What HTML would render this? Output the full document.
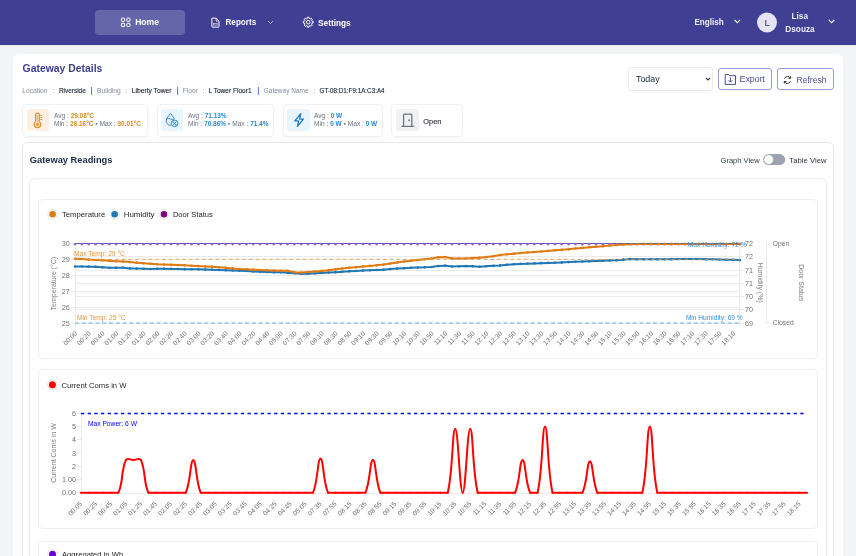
<!DOCTYPE html>
<html><head><meta charset="utf-8">
<style>
*{box-sizing:border-box;margin:0;padding:0}
html,body{width:856px;height:556px;overflow:hidden;background:#f3f4f6;font-family:"Liberation Sans", sans-serif;}
.a{position:absolute;white-space:nowrap;line-height:1}
#hdr{position:absolute;left:0;top:0;width:856px;height:45px;background:#3f3f94;}
.card{position:absolute;background:#fff;}
.bd{position:absolute;border:1px solid #e8eaee;}
svg text{font-family:"Liberation Sans", sans-serif;}
</style></head><body>
<div id="hdr"></div><div class="a" style="left:0;top:45px;width:856px;height:1px;background:#eaeaf3"></div>
<div class="a" style="left:95px;top:10px;width:90px;height:25px;border-radius:4px;background:rgba(255,255,255,0.2)"></div>
<svg class="a" style="left:0;top:0;will-change:transform" width="856" height="45">
  <g fill="none" stroke="#fff" stroke-width="1.1">
    <rect x="121.4" y="18.2" width="3.2" height="3.2" rx="0.6" stroke-width="1"/><rect x="126.8" y="18.2" width="3.2" height="3.2" rx="0.6" stroke-width="1"/>
    <rect x="121.4" y="23.4" width="3.2" height="3.2" rx="0.6" stroke-width="1"/><rect x="126.8" y="23.4" width="3.2" height="3.2" rx="0.6" stroke-width="1"/>
    <path d="M211.9,18.2 h4.3 l2.8,2.8 v5.6 q0,0.5 -0.5,0.5 h-6.1 q-0.5,0 -0.5,-0.5 z" stroke-width="1"/><path d="M216.2,18.2 v2.8 h2.8" stroke-width="0.8"/>
    <path d="M268,21 l2.5,2.5 l2.5,-2.5" stroke-width="0.8" stroke="#c8c8e8"/>
    <path d="M734.5,19.8 l2.8,2.8 l2.8,-2.8" stroke-width="1.1"/>
    <path d="M828.8,19.8 l2.8,2.8 l2.8,-2.8" stroke-width="1.1"/>
  </g>
  <rect x="213.6" y="23.3" width="3.6" height="1.8" fill="none" stroke="#fff" stroke-width="0.6" opacity="0.9"/>
  <g transform="translate(308.2,22.2)" fill="none" stroke="#fff" stroke-width="1">
    <circle r="1.8"/>
    <path d="M3.78,-0.94 L4.93,-0.82 L4.93,0.82 L3.78,0.94 L3.34,2.01 L4.07,2.91 L2.91,4.07 L2.01,3.34 L0.94,3.78 L0.82,4.93 L-0.82,4.93 L-0.94,3.78 L-2.01,3.34 L-2.91,4.07 L-4.07,2.91 L-3.34,2.01 L-3.78,0.94 L-4.93,0.82 L-4.93,-0.82 L-3.78,-0.94 L-3.34,-2.01 L-4.07,-2.91 L-2.91,-4.07 L-2.01,-3.34 L-0.94,-3.78 L-0.82,-4.93 L0.82,-4.93 L0.94,-3.78 L2.01,-3.34 L2.91,-4.07 L4.07,-2.91 L3.34,-2.01 Z" stroke-linejoin="round"/>
  </g>
  <circle cx="767" cy="22.5" r="10" fill="#e4e4f4"/>
  <text x="767.2" y="25.9" font-size="8.6" font-weight="700" fill="#5f5f7a" text-anchor="middle">L</text>
  <g font-weight="700" fill="#fff">
    <text x="135.2" y="25.4" font-size="8.55">Home</text>
    <text x="225.5" y="25.4" font-size="8.15">Reports</text>
    <text x="318" y="25.5" font-size="8.3">Settings</text>
    <text x="694.4" y="25" font-size="8.15" fill="#ececf8">English</text>
    <text x="799.8" y="18.5" font-size="8.2" text-anchor="middle" fill="#ececf8">Lisa</text>
    <text x="800" y="31.9" font-size="8.27" text-anchor="middle" fill="#ececf8">Dsouza</text>
  </g>
</svg>
<div class="card" style="left:13px;top:54px;width:829.5px;height:520px;border-radius:6px"></div>
<div class="bd" style="left:22px;top:142px;width:812px;height:430px;border-radius:6px;border-color:#e6e8ec"></div>
<div class="bd" style="left:29px;top:178px;width:797.8px;height:400px;border-radius:6px;border-color:#eceef1"></div>
<div class="bd" style="left:38px;top:199px;width:779.8px;height:159.5px;border-radius:5px;border-color:#eceef1"></div>
<div class="bd" style="left:38px;top:369px;width:779.8px;height:159.5px;border-radius:5px;border-color:#eceef1"></div>
<div class="bd" style="left:38px;top:540.5px;width:779.8px;height:100px;border-radius:5px;border-color:#eceef1"></div>
<!-- metric cards -->
<div class="bd" style="left:22px;top:104px;width:125.5px;height:32.5px;border-radius:4px;border-color:#eef0f3;box-shadow:0 1px 2px rgba(0,0,0,0.04)"></div>
<div class="bd" style="left:156.5px;top:104px;width:117.5px;height:32.5px;border-radius:4px;border-color:#eef0f3;box-shadow:0 1px 2px rgba(0,0,0,0.04)"></div>
<div class="bd" style="left:282.5px;top:104px;width:100.5px;height:32.5px;border-radius:4px;border-color:#eef0f3;box-shadow:0 1px 2px rgba(0,0,0,0.04)"></div>
<div class="bd" style="left:391px;top:104px;width:72px;height:32.5px;border-radius:4px;border-color:#eef0f3;box-shadow:0 1px 2px rgba(0,0,0,0.04)"></div>
<div class="a" style="left:27px;top:109px;width:22px;height:22px;border-radius:3px;background:#fdf0e2"></div>
<div class="a" style="left:161px;top:109px;width:22px;height:22px;border-radius:3px;background:#e9f4fd"></div>
<div class="a" style="left:287px;top:109px;width:22.5px;height:22px;border-radius:3px;background:#e9f4fd"></div>
<div class="a" style="left:396px;top:109px;width:22.5px;height:22px;border-radius:3px;background:#f1f1f3"></div>
<!-- select & buttons -->
<div class="bd" style="left:628px;top:67px;width:85px;height:24px;border-radius:3px;border-color:#e8eaed"></div>
<div class="bd" style="left:717.5px;top:68px;width:54.5px;height:22px;border-radius:3px;border-color:#9a9ad2"></div>
<div class="bd" style="left:777px;top:68px;width:57px;height:22px;border-radius:3px;border-color:#9a9ad2"></div>
<svg class="a" style="left:0;top:0;will-change:transform" width="856" height="556">
  <text x="22.6" y="71.6" font-size="10.4" font-weight="700" fill="#3d3d90">Gateway Details</text>
  <g font-size="6.7">
    <text x="22.2" y="93" fill="#868d99">Location</text><text x="52.3" y="93" fill="#868d99">:</text>
    <text x="58.9" y="93" fill="#1f2937" font-size="6.45" stroke="#1f2937" stroke-width="0.14">Riverside</text>
    <text x="97" y="93" fill="#868d99">Building</text><text x="125.3" y="93" fill="#868d99">:</text>
    <text x="131.8" y="93" fill="#1f2937" stroke="#1f2937" stroke-width="0.14">Liberty Tower</text>
    <text x="182.7" y="93" fill="#868d99">Floor</text><text x="202.6" y="93" fill="#868d99">:</text>
    <text x="208.6" y="93" fill="#1f2937" font-size="6.56" stroke="#1f2937" stroke-width="0.14">L Tower Floor1</text>
    <text x="263.7" y="93" fill="#868d99" font-size="6.53">Gateway Name</text><text x="313.3" y="93" fill="#868d99">:</text>
    <text x="319.5" y="93" fill="#1f2937" font-size="6.3" stroke="#1f2937" stroke-width="0.14">GT-08:D1:F9:1A:C3:A4</text>
  </g>
  <g stroke="#5050a8" stroke-width="0.85"><line x1="91.6" y1="87" x2="91.6" y2="95"/><line x1="177.6" y1="87" x2="177.6" y2="95"/><line x1="258.3" y1="87" x2="258.3" y2="95"/></g>
  <!-- metric texts -->
  <g font-size="6.6" fill="#6b7280">
    <text x="53.9" y="117.9">Avg : <tspan fill="#d8891c" font-weight="700" font-size="6.45">29.08°C</tspan></text>
    <text x="53.9" y="126.3">Min : <tspan fill="#d8891c" font-weight="700" font-size="6.45">28.16°C</tspan> <tspan font-size="4.2" dy="-1.7">●</tspan><tspan dy="1.7"> Max : </tspan><tspan fill="#d8891c" font-weight="700" font-size="6.45">30.01°C</tspan></text>
    <text x="188" y="117.9">Avg : <tspan fill="#2688d0" font-weight="700" font-size="6.45">71.13%</tspan></text>
    <text x="188" y="126.3">Min : <tspan fill="#2688d0" font-weight="700" font-size="6.45">70.86%</tspan> <tspan font-size="4.2" dy="-1.7">●</tspan><tspan dy="1.7"> Max : </tspan><tspan fill="#2688d0" font-weight="700" font-size="6.45">71.4%</tspan></text>
    <text x="314" y="117.9">Avg : <tspan fill="#2688d0" font-weight="700" font-size="6.45">0 W</tspan></text>
    <text x="314" y="126.3">Min : <tspan fill="#2688d0" font-weight="700" font-size="6.45">0 W</tspan> <tspan font-size="4.2" dy="-1.7">●</tspan><tspan dy="1.7"> Max : </tspan><tspan fill="#2688d0" font-weight="700" font-size="6.45">0 W</tspan></text>
  </g>
  <text x="423.3" y="123.8" font-size="7.4" fill="#1f2937" stroke="#1f2937" stroke-width="0.12">Open</text>
  <!-- icons -->
  <g fill="none" stroke="#e0912f" stroke-width="1.25">
    <path d="M35.7,121.6 V114.9 a1.8,1.8 0 0 1 3.6,0 V121.6 a3.3,3.3 0 1 1 -3.6,0 z"/>
    <path d="M40.5,115.5 h1.8 M40.5,117.5 h1.8 M40.5,119.5 h1.8" stroke-width="1"/>
  </g>
  <circle cx="37.5" cy="124.4" r="1.9" fill="#e9a55a"/>
  <rect x="37" y="115" width="1" height="7" fill="#eeb678"/>
  <g fill="none" stroke="#2a86cc" stroke-width="0.95">
    <path d="M170.5,113.2 L166.6,118.8 a4.6,4.6 0 0 0 4.2,6.6 M170.5,113.2 L174.4,118.8"/>
    <path d="M166.4,119 q2,-0.9 4,0 t4,0"/>
    <circle cx="174.6" cy="123.4" r="3.3"/><path d="M172.7,125.3 L176.5,121.5"/>
    <circle cx="173.5" cy="122.2" r="0.5"/><circle cx="175.7" cy="124.6" r="0.5"/>
  </g>
  <path d="M300.8,113.6 L294.8,120.9 H298.6 L297.4,126.4 L303.4,119.1 H299.6 Z" fill="none" stroke="#1f7bc2" stroke-width="1.3" stroke-linejoin="round"/>
  <g fill="none" stroke="#6b7280" stroke-width="1">
    <path d="M403.6,126 V115 q0,-0.9 0.9,-0.9 h6.4 q0.9,0 0.9,0.9 V126" stroke-width="1.25"/><path d="M401.2,126.4 H414.2" stroke-width="1.2"/>
  </g>
  <circle cx="409.2" cy="120.2" r="0.95" fill="#6b7280"/>
  <!-- select/buttons -->
  <text x="636" y="82.4" font-size="8.9" fill="#1f2937">Today</text>
  <path d="M705.8,77.8 l2.2,2.2 l2.2,-2.2" fill="none" stroke="#333" stroke-width="1.1"/>
  <g fill="none" stroke="#4a4a9e" stroke-width="1">
    <path d="M725.2,74.5 h3.5 l1,1.2 h5.8 v8.7 h-10.3 z"/><path d="M730.4,77.5 v4.4 M728.6,80.3 l1.8,1.8 l1.8,-1.8"/>
  </g>
  <text x="739.6" y="82.4" font-size="8.8" fill="#4a4a9e">Export</text>
  <g fill="none" stroke="#333" stroke-width="1" transform="translate(1.5,0.8)">
    <path d="M789,77.4 a3.3,3.3 0 0 0 -6,0.4 M782.9,80.9 a3.3,3.3 0 0 0 6,-0.4"/>
    <path d="M789.1,75.4 v2.1 h-2.1 M782.8,82.8 v-2.1 h2.1"/>
  </g>
  <text x="796.6" y="82.7" font-size="8.5" fill="#4a4a9e">Refresh</text>
  <!-- readings header -->
  <text x="29.8" y="163.2" font-size="9.3" font-weight="700" fill="#1e2a45">Gateway Readings</text>
  <text x="720.6" y="162.7" font-size="7.5" fill="#2f3a4a">Graph View</text>
  <rect x="763.2" y="154.1" width="22" height="11" rx="5.5" fill="#9ca3af"/>
  <circle cx="768.7" cy="159.6" r="4.5" fill="#fff"/>
  <text x="789.3" y="162.7" font-size="7.74" fill="#2f3a4a">Table View</text>
  <!-- legends -->
  <g>
    <circle cx="52.6" cy="214.3" r="4.9" fill="#fff" stroke="#e4e4e4" stroke-width="0.9"/><circle cx="52.6" cy="214.3" r="3.3" fill="#df7b14"/>
    <circle cx="114.6" cy="214.3" r="4.9" fill="#fff" stroke="#e4e4e4" stroke-width="0.9"/><circle cx="114.6" cy="214.3" r="3.3" fill="#1f77b4"/>
    <circle cx="164" cy="214.3" r="4.9" fill="#fff" stroke="#e4e4e4" stroke-width="0.9"/><circle cx="164" cy="214.3" r="3.3" fill="#800080"/>
    <circle cx="52.4" cy="384.7" r="4.9" fill="#fff" stroke="#e4e4e4" stroke-width="0.9"/><circle cx="52.4" cy="384.7" r="3.5" fill="#ff0000"/>
    <circle cx="52.5" cy="554.3" r="4.9" fill="#fff" stroke="#e4e4e4" stroke-width="0.9"/><circle cx="52.5" cy="554.3" r="3.5" fill="#6a00d8"/>
  </g>
  <g fill="#262626">
    <text x="62" y="217.2" font-size="7.7">Temperature</text>
    <text x="123.7" y="217.2" font-size="7.94">Humidity</text>
    <text x="172.9" y="217.2" font-size="7.56">Door Status</text>
    <text x="61.5" y="387.5" font-size="7.65">Current Coms in W</text>
    <text x="62" y="557.2" font-size="7.65">Aggregated in Wh</text>
  </g>
<line x1="71.0" y1="323.50" x2="740.0" y2="323.50" stroke="#ebebeb" stroke-width="1"/>
<text x="69.70" y="325.60" font-size="7.2" font-weight="400" fill="#707070" text-anchor="end" >25</text>
<line x1="71.0" y1="307.50" x2="740.0" y2="307.50" stroke="#ebebeb" stroke-width="1"/>
<text x="69.70" y="309.70" font-size="7.2" font-weight="400" fill="#707070" text-anchor="end" >26</text>
<line x1="71.0" y1="291.50" x2="740.0" y2="291.50" stroke="#ebebeb" stroke-width="1"/>
<text x="69.70" y="293.80" font-size="7.2" font-weight="400" fill="#707070" text-anchor="end" >27</text>
<line x1="71.0" y1="275.50" x2="740.0" y2="275.50" stroke="#ebebeb" stroke-width="1"/>
<text x="69.70" y="277.90" font-size="7.2" font-weight="400" fill="#707070" text-anchor="end" >28</text>
<line x1="71.0" y1="259.50" x2="740.0" y2="259.50" stroke="#ebebeb" stroke-width="1"/>
<text x="69.70" y="262.00" font-size="7.2" font-weight="400" fill="#707070" text-anchor="end" >29</text>
<line x1="71.0" y1="243.50" x2="740.0" y2="243.50" stroke="#ebebeb" stroke-width="1"/>
<text x="69.70" y="246.10" font-size="7.2" font-weight="400" fill="#707070" text-anchor="end" >30</text>
<line x1="75.0" y1="323.50" x2="744.0" y2="323.50" stroke="#ebebeb" stroke-width="1"/>
<text x="745.00" y="325.60" font-size="7.2" font-weight="400" fill="#707070" text-anchor="start" >69</text>
<line x1="75.0" y1="309.50" x2="744.0" y2="309.50" stroke="#ebebeb" stroke-width="1"/>
<text x="745.00" y="312.35" font-size="7.2" font-weight="400" fill="#707070" text-anchor="start" >70</text>
<line x1="75.0" y1="296.50" x2="744.0" y2="296.50" stroke="#ebebeb" stroke-width="1"/>
<text x="745.00" y="299.10" font-size="7.2" font-weight="400" fill="#707070" text-anchor="start" >70</text>
<line x1="75.0" y1="283.50" x2="744.0" y2="283.50" stroke="#ebebeb" stroke-width="1"/>
<text x="745.00" y="285.85" font-size="7.2" font-weight="400" fill="#707070" text-anchor="start" >71</text>
<line x1="75.0" y1="270.50" x2="744.0" y2="270.50" stroke="#ebebeb" stroke-width="1"/>
<text x="745.00" y="272.60" font-size="7.2" font-weight="400" fill="#707070" text-anchor="start" >71</text>
<line x1="75.0" y1="256.50" x2="744.0" y2="256.50" stroke="#ebebeb" stroke-width="1"/>
<text x="745.00" y="259.35" font-size="7.2" font-weight="400" fill="#707070" text-anchor="start" >72</text>
<line x1="75.0" y1="243.50" x2="744.0" y2="243.50" stroke="#ebebeb" stroke-width="1"/>
<text x="745.00" y="246.10" font-size="7.2" font-weight="400" fill="#707070" text-anchor="start" >72</text>
<line x1="75.5" y1="243.5" x2="75.5" y2="326.0" stroke="#ebebeb" stroke-width="1"/>
<line x1="739.5" y1="243.5" x2="739.5" y2="326.0" stroke="#ebebeb" stroke-width="1"/>
<line x1="766.5" y1="243.5" x2="766.5" y2="323.5" stroke="#ebebeb" stroke-width="1"/>
<line x1="766.5" y1="243.5" x2="770" y2="243.5" stroke="#ebebeb" stroke-width="1"/>
<line x1="766.5" y1="322.5" x2="770" y2="322.5" stroke="#ebebeb" stroke-width="1"/>
<text x="772.80" y="245.90" font-size="6.7" font-weight="400" fill="#707070" text-anchor="start" >Open</text>
<text x="772.80" y="325.40" font-size="6.7" font-weight="400" fill="#707070" text-anchor="start" >Closed</text>
<text x="0" y="0" font-size="7" fill="#808080" text-anchor="middle" transform="translate(55.8,283.5) rotate(-90)">Temperature (°C)</text>
<text x="0" y="0" font-size="7" fill="#808080" text-anchor="middle" transform="translate(757.5,282.7) rotate(90)">Humidity (%)</text>
<text x="0" y="0" font-size="7" fill="#808080" text-anchor="middle" transform="translate(799.3,282.7) rotate(90)">Door Status</text>
<text x="0" y="0" font-size="6.6" fill="#707070" text-anchor="end" transform="translate(77.60,334.00) rotate(-45)">00:00</text>
<text x="0" y="0" font-size="6.6" fill="#707070" text-anchor="end" transform="translate(91.31,334.00) rotate(-45)">00:20</text>
<text x="0" y="0" font-size="6.6" fill="#707070" text-anchor="end" transform="translate(105.02,334.00) rotate(-45)">00:40</text>
<text x="0" y="0" font-size="6.6" fill="#707070" text-anchor="end" transform="translate(118.73,334.00) rotate(-45)">01:00</text>
<text x="0" y="0" font-size="6.6" fill="#707070" text-anchor="end" transform="translate(132.45,334.00) rotate(-45)">01:20</text>
<text x="0" y="0" font-size="6.6" fill="#707070" text-anchor="end" transform="translate(146.16,334.00) rotate(-45)">01:40</text>
<text x="0" y="0" font-size="6.6" fill="#707070" text-anchor="end" transform="translate(159.87,334.00) rotate(-45)">02:00</text>
<text x="0" y="0" font-size="6.6" fill="#707070" text-anchor="end" transform="translate(173.58,334.00) rotate(-45)">02:20</text>
<text x="0" y="0" font-size="6.6" fill="#707070" text-anchor="end" transform="translate(187.29,334.00) rotate(-45)">02:40</text>
<text x="0" y="0" font-size="6.6" fill="#707070" text-anchor="end" transform="translate(201.00,334.00) rotate(-45)">03:00</text>
<text x="0" y="0" font-size="6.6" fill="#707070" text-anchor="end" transform="translate(214.71,334.00) rotate(-45)">03:20</text>
<text x="0" y="0" font-size="6.6" fill="#707070" text-anchor="end" transform="translate(228.42,334.00) rotate(-45)">03:40</text>
<text x="0" y="0" font-size="6.6" fill="#707070" text-anchor="end" transform="translate(242.14,334.00) rotate(-45)">04:00</text>
<text x="0" y="0" font-size="6.6" fill="#707070" text-anchor="end" transform="translate(255.85,334.00) rotate(-45)">04:20</text>
<text x="0" y="0" font-size="6.6" fill="#707070" text-anchor="end" transform="translate(269.56,334.00) rotate(-45)">04:40</text>
<text x="0" y="0" font-size="6.6" fill="#707070" text-anchor="end" transform="translate(283.27,334.00) rotate(-45)">05:00</text>
<text x="0" y="0" font-size="6.6" fill="#707070" text-anchor="end" transform="translate(296.98,334.00) rotate(-45)">07:30</text>
<text x="0" y="0" font-size="6.6" fill="#707070" text-anchor="end" transform="translate(310.69,334.00) rotate(-45)">07:50</text>
<text x="0" y="0" font-size="6.6" fill="#707070" text-anchor="end" transform="translate(324.40,334.00) rotate(-45)">08:10</text>
<text x="0" y="0" font-size="6.6" fill="#707070" text-anchor="end" transform="translate(338.12,334.00) rotate(-45)">08:30</text>
<text x="0" y="0" font-size="6.6" fill="#707070" text-anchor="end" transform="translate(351.83,334.00) rotate(-45)">08:50</text>
<text x="0" y="0" font-size="6.6" fill="#707070" text-anchor="end" transform="translate(365.54,334.00) rotate(-45)">09:10</text>
<text x="0" y="0" font-size="6.6" fill="#707070" text-anchor="end" transform="translate(379.25,334.00) rotate(-45)">09:30</text>
<text x="0" y="0" font-size="6.6" fill="#707070" text-anchor="end" transform="translate(392.96,334.00) rotate(-45)">09:50</text>
<text x="0" y="0" font-size="6.6" fill="#707070" text-anchor="end" transform="translate(406.67,334.00) rotate(-45)">10:10</text>
<text x="0" y="0" font-size="6.6" fill="#707070" text-anchor="end" transform="translate(420.38,334.00) rotate(-45)">10:30</text>
<text x="0" y="0" font-size="6.6" fill="#707070" text-anchor="end" transform="translate(434.09,334.00) rotate(-45)">10:50</text>
<text x="0" y="0" font-size="6.6" fill="#707070" text-anchor="end" transform="translate(447.81,334.00) rotate(-45)">11:10</text>
<text x="0" y="0" font-size="6.6" fill="#707070" text-anchor="end" transform="translate(461.52,334.00) rotate(-45)">11:30</text>
<text x="0" y="0" font-size="6.6" fill="#707070" text-anchor="end" transform="translate(475.23,334.00) rotate(-45)">11:50</text>
<text x="0" y="0" font-size="6.6" fill="#707070" text-anchor="end" transform="translate(488.94,334.00) rotate(-45)">12:10</text>
<text x="0" y="0" font-size="6.6" fill="#707070" text-anchor="end" transform="translate(502.65,334.00) rotate(-45)">12:30</text>
<text x="0" y="0" font-size="6.6" fill="#707070" text-anchor="end" transform="translate(516.36,334.00) rotate(-45)">12:50</text>
<text x="0" y="0" font-size="6.6" fill="#707070" text-anchor="end" transform="translate(530.07,334.00) rotate(-45)">13:10</text>
<text x="0" y="0" font-size="6.6" fill="#707070" text-anchor="end" transform="translate(543.79,334.00) rotate(-45)">13:30</text>
<text x="0" y="0" font-size="6.6" fill="#707070" text-anchor="end" transform="translate(557.50,334.00) rotate(-45)">13:50</text>
<text x="0" y="0" font-size="6.6" fill="#707070" text-anchor="end" transform="translate(571.21,334.00) rotate(-45)">14:10</text>
<text x="0" y="0" font-size="6.6" fill="#707070" text-anchor="end" transform="translate(584.92,334.00) rotate(-45)">14:30</text>
<text x="0" y="0" font-size="6.6" fill="#707070" text-anchor="end" transform="translate(598.63,334.00) rotate(-45)">14:50</text>
<text x="0" y="0" font-size="6.6" fill="#707070" text-anchor="end" transform="translate(612.34,334.00) rotate(-45)">15:10</text>
<text x="0" y="0" font-size="6.6" fill="#707070" text-anchor="end" transform="translate(626.05,334.00) rotate(-45)">15:30</text>
<text x="0" y="0" font-size="6.6" fill="#707070" text-anchor="end" transform="translate(639.76,334.00) rotate(-45)">15:50</text>
<text x="0" y="0" font-size="6.6" fill="#707070" text-anchor="end" transform="translate(653.48,334.00) rotate(-45)">16:10</text>
<text x="0" y="0" font-size="6.6" fill="#707070" text-anchor="end" transform="translate(667.19,334.00) rotate(-45)">16:30</text>
<text x="0" y="0" font-size="6.6" fill="#707070" text-anchor="end" transform="translate(680.90,334.00) rotate(-45)">16:50</text>
<text x="0" y="0" font-size="6.6" fill="#707070" text-anchor="end" transform="translate(694.61,334.00) rotate(-45)">17:10</text>
<text x="0" y="0" font-size="6.6" fill="#707070" text-anchor="end" transform="translate(708.32,334.00) rotate(-45)">17:30</text>
<text x="0" y="0" font-size="6.6" fill="#707070" text-anchor="end" transform="translate(722.03,334.00) rotate(-45)">17:50</text>
<text x="0" y="0" font-size="6.6" fill="#707070" text-anchor="end" transform="translate(735.74,334.00) rotate(-45)">18:10</text>
<line x1="75.0" y1="243.5" x2="740.0" y2="243.5" stroke="#a040a0" stroke-width="1"/>
<circle cx="75.00" cy="244.3" r="1.2" fill="#b060c0"/>
<circle cx="81.86" cy="244.3" r="1.2" fill="#b060c0"/>
<circle cx="88.71" cy="244.3" r="1.2" fill="#b060c0"/>
<circle cx="95.57" cy="244.3" r="1.2" fill="#b060c0"/>
<circle cx="102.42" cy="244.3" r="1.2" fill="#b060c0"/>
<circle cx="109.28" cy="244.3" r="1.2" fill="#b060c0"/>
<circle cx="116.13" cy="244.3" r="1.2" fill="#b060c0"/>
<circle cx="122.99" cy="244.3" r="1.2" fill="#b060c0"/>
<circle cx="129.85" cy="244.3" r="1.2" fill="#b060c0"/>
<circle cx="136.70" cy="244.3" r="1.2" fill="#b060c0"/>
<circle cx="143.56" cy="244.3" r="1.2" fill="#b060c0"/>
<circle cx="150.41" cy="244.3" r="1.2" fill="#b060c0"/>
<circle cx="157.27" cy="244.3" r="1.2" fill="#b060c0"/>
<circle cx="164.12" cy="244.3" r="1.2" fill="#b060c0"/>
<circle cx="170.98" cy="244.3" r="1.2" fill="#b060c0"/>
<circle cx="177.84" cy="244.3" r="1.2" fill="#b060c0"/>
<circle cx="184.69" cy="244.3" r="1.2" fill="#b060c0"/>
<circle cx="191.55" cy="244.3" r="1.2" fill="#b060c0"/>
<circle cx="198.40" cy="244.3" r="1.2" fill="#b060c0"/>
<circle cx="205.26" cy="244.3" r="1.2" fill="#b060c0"/>
<circle cx="212.11" cy="244.3" r="1.2" fill="#b060c0"/>
<circle cx="218.97" cy="244.3" r="1.2" fill="#b060c0"/>
<circle cx="225.82" cy="244.3" r="1.2" fill="#b060c0"/>
<circle cx="232.68" cy="244.3" r="1.2" fill="#b060c0"/>
<circle cx="239.54" cy="244.3" r="1.2" fill="#b060c0"/>
<circle cx="246.39" cy="244.3" r="1.2" fill="#b060c0"/>
<circle cx="253.25" cy="244.3" r="1.2" fill="#b060c0"/>
<circle cx="260.10" cy="244.3" r="1.2" fill="#b060c0"/>
<circle cx="266.96" cy="244.3" r="1.2" fill="#b060c0"/>
<circle cx="273.81" cy="244.3" r="1.2" fill="#b060c0"/>
<circle cx="280.67" cy="244.3" r="1.2" fill="#b060c0"/>
<circle cx="287.53" cy="244.3" r="1.2" fill="#b060c0"/>
<circle cx="294.38" cy="244.3" r="1.2" fill="#b060c0"/>
<circle cx="301.24" cy="244.3" r="1.2" fill="#b060c0"/>
<circle cx="308.09" cy="244.3" r="1.2" fill="#b060c0"/>
<circle cx="314.95" cy="244.3" r="1.2" fill="#b060c0"/>
<circle cx="321.80" cy="244.3" r="1.2" fill="#b060c0"/>
<circle cx="328.66" cy="244.3" r="1.2" fill="#b060c0"/>
<circle cx="335.52" cy="244.3" r="1.2" fill="#b060c0"/>
<circle cx="342.37" cy="244.3" r="1.2" fill="#b060c0"/>
<circle cx="349.23" cy="244.3" r="1.2" fill="#b060c0"/>
<circle cx="356.08" cy="244.3" r="1.2" fill="#b060c0"/>
<circle cx="362.94" cy="244.3" r="1.2" fill="#b060c0"/>
<circle cx="369.79" cy="244.3" r="1.2" fill="#b060c0"/>
<circle cx="376.65" cy="244.3" r="1.2" fill="#b060c0"/>
<circle cx="383.51" cy="244.3" r="1.2" fill="#b060c0"/>
<circle cx="390.36" cy="244.3" r="1.2" fill="#b060c0"/>
<circle cx="397.22" cy="244.3" r="1.2" fill="#b060c0"/>
<circle cx="404.07" cy="244.3" r="1.2" fill="#b060c0"/>
<circle cx="410.93" cy="244.3" r="1.2" fill="#b060c0"/>
<circle cx="417.78" cy="244.3" r="1.2" fill="#b060c0"/>
<circle cx="424.64" cy="244.3" r="1.2" fill="#b060c0"/>
<circle cx="431.49" cy="244.3" r="1.2" fill="#b060c0"/>
<circle cx="438.35" cy="244.3" r="1.2" fill="#b060c0"/>
<circle cx="445.21" cy="244.3" r="1.2" fill="#b060c0"/>
<circle cx="452.06" cy="244.3" r="1.2" fill="#b060c0"/>
<circle cx="458.92" cy="244.3" r="1.2" fill="#b060c0"/>
<circle cx="465.77" cy="244.3" r="1.2" fill="#b060c0"/>
<circle cx="472.63" cy="244.3" r="1.2" fill="#b060c0"/>
<circle cx="479.48" cy="244.3" r="1.2" fill="#b060c0"/>
<circle cx="486.34" cy="244.3" r="1.2" fill="#b060c0"/>
<circle cx="493.20" cy="244.3" r="1.2" fill="#b060c0"/>
<circle cx="500.05" cy="244.3" r="1.2" fill="#b060c0"/>
<circle cx="506.91" cy="244.3" r="1.2" fill="#b060c0"/>
<circle cx="513.76" cy="244.3" r="1.2" fill="#b060c0"/>
<circle cx="520.62" cy="244.3" r="1.2" fill="#b060c0"/>
<circle cx="527.47" cy="244.3" r="1.2" fill="#b060c0"/>
<circle cx="534.33" cy="244.3" r="1.2" fill="#b060c0"/>
<circle cx="541.19" cy="244.3" r="1.2" fill="#b060c0"/>
<circle cx="548.04" cy="244.3" r="1.2" fill="#b060c0"/>
<circle cx="554.90" cy="244.3" r="1.2" fill="#b060c0"/>
<circle cx="561.75" cy="244.3" r="1.2" fill="#b060c0"/>
<circle cx="568.61" cy="244.3" r="1.2" fill="#b060c0"/>
<circle cx="575.46" cy="244.3" r="1.2" fill="#b060c0"/>
<circle cx="582.32" cy="244.3" r="1.2" fill="#b060c0"/>
<circle cx="589.18" cy="244.3" r="1.2" fill="#b060c0"/>
<circle cx="596.03" cy="244.3" r="1.2" fill="#b060c0"/>
<circle cx="602.89" cy="244.3" r="1.2" fill="#b060c0"/>
<circle cx="609.74" cy="244.3" r="1.2" fill="#b060c0"/>
<circle cx="616.60" cy="244.3" r="1.2" fill="#b060c0"/>
<circle cx="623.45" cy="244.3" r="1.2" fill="#b060c0"/>
<circle cx="630.31" cy="244.3" r="1.2" fill="#b060c0"/>
<circle cx="637.16" cy="244.3" r="1.2" fill="#b060c0"/>
<circle cx="644.02" cy="244.3" r="1.2" fill="#b060c0"/>
<circle cx="650.88" cy="244.3" r="1.2" fill="#b060c0"/>
<circle cx="657.73" cy="244.3" r="1.2" fill="#b060c0"/>
<circle cx="664.59" cy="244.3" r="1.2" fill="#b060c0"/>
<circle cx="671.44" cy="244.3" r="1.2" fill="#b060c0"/>
<circle cx="678.30" cy="244.3" r="1.2" fill="#b060c0"/>
<circle cx="685.15" cy="244.3" r="1.2" fill="#b060c0"/>
<circle cx="692.01" cy="244.3" r="1.2" fill="#b060c0"/>
<circle cx="698.87" cy="244.3" r="1.2" fill="#b060c0"/>
<circle cx="705.72" cy="244.3" r="1.2" fill="#b060c0"/>
<circle cx="712.58" cy="244.3" r="1.2" fill="#b060c0"/>
<circle cx="719.43" cy="244.3" r="1.2" fill="#b060c0"/>
<circle cx="726.29" cy="244.3" r="1.2" fill="#b060c0"/>
<circle cx="733.14" cy="244.3" r="1.2" fill="#b060c0"/>
<circle cx="740.00" cy="244.3" r="1.2" fill="#b060c0"/>
<polyline points="75.00,266.50 81.86,266.57 88.71,266.63 95.57,266.70 102.42,267.34 109.28,267.85 116.13,267.82 122.99,267.73 129.85,268.38 136.70,268.60 143.56,268.81 150.41,268.99 157.27,268.78 164.12,268.77 170.98,268.89 177.84,269.01 184.69,269.13 191.55,269.25 198.40,269.37 205.26,269.58 212.11,269.82 218.97,270.06 225.82,270.27 232.68,270.48 239.54,270.69 246.39,271.05 253.25,271.43 260.10,271.80 266.96,271.97 273.81,272.15 280.67,272.35 287.53,272.83 294.38,273.31 301.24,273.70 308.09,273.70 314.95,273.35 321.80,272.90 328.66,272.52 335.52,272.15 342.37,271.76 349.23,271.35 356.08,270.94 362.94,270.58 369.79,270.31 376.65,270.03 383.51,269.64 390.36,269.12 397.22,268.61 404.07,268.20 410.93,267.85 417.78,267.51 424.64,267.31 431.49,266.94 438.35,265.93 445.21,265.63 452.06,266.50 458.92,266.23 465.77,266.04 472.63,266.36 479.48,266.68 486.34,266.29 493.20,265.84 500.05,265.39 506.91,264.71 513.76,264.21 520.62,263.88 527.47,263.64 534.33,263.40 541.19,263.16 548.04,262.92 554.90,262.68 561.75,262.42 568.61,262.11 575.46,261.80 582.32,261.52 589.18,261.28 596.03,261.04 602.89,260.77 609.74,260.46 616.60,260.15 623.45,259.65 630.31,259.01 637.16,259.21 644.02,259.28 650.88,259.25 657.73,259.21 664.59,259.18 671.44,259.14 678.30,259.11 685.15,259.07 692.01,259.04 698.87,259.01 705.72,259.14 712.58,259.31 719.43,259.49 726.29,259.66 733.14,259.83 740.00,260.00" fill="none" stroke="#1f77b4" stroke-width="2" stroke-linejoin="round"/>
<circle cx="75.00" cy="266.50" r="1.3" fill="#1f77b4"/>
<circle cx="81.86" cy="266.57" r="1.3" fill="#1f77b4"/>
<circle cx="88.71" cy="266.63" r="1.3" fill="#1f77b4"/>
<circle cx="95.57" cy="266.70" r="1.3" fill="#1f77b4"/>
<circle cx="102.42" cy="267.34" r="1.3" fill="#1f77b4"/>
<circle cx="109.28" cy="267.85" r="1.3" fill="#1f77b4"/>
<circle cx="116.13" cy="267.82" r="1.3" fill="#1f77b4"/>
<circle cx="122.99" cy="267.73" r="1.3" fill="#1f77b4"/>
<circle cx="129.85" cy="268.38" r="1.3" fill="#1f77b4"/>
<circle cx="136.70" cy="268.60" r="1.3" fill="#1f77b4"/>
<circle cx="143.56" cy="268.81" r="1.3" fill="#1f77b4"/>
<circle cx="150.41" cy="268.99" r="1.3" fill="#1f77b4"/>
<circle cx="157.27" cy="268.78" r="1.3" fill="#1f77b4"/>
<circle cx="164.12" cy="268.77" r="1.3" fill="#1f77b4"/>
<circle cx="170.98" cy="268.89" r="1.3" fill="#1f77b4"/>
<circle cx="177.84" cy="269.01" r="1.3" fill="#1f77b4"/>
<circle cx="184.69" cy="269.13" r="1.3" fill="#1f77b4"/>
<circle cx="191.55" cy="269.25" r="1.3" fill="#1f77b4"/>
<circle cx="198.40" cy="269.37" r="1.3" fill="#1f77b4"/>
<circle cx="205.26" cy="269.58" r="1.3" fill="#1f77b4"/>
<circle cx="212.11" cy="269.82" r="1.3" fill="#1f77b4"/>
<circle cx="218.97" cy="270.06" r="1.3" fill="#1f77b4"/>
<circle cx="225.82" cy="270.27" r="1.3" fill="#1f77b4"/>
<circle cx="232.68" cy="270.48" r="1.3" fill="#1f77b4"/>
<circle cx="239.54" cy="270.69" r="1.3" fill="#1f77b4"/>
<circle cx="246.39" cy="271.05" r="1.3" fill="#1f77b4"/>
<circle cx="253.25" cy="271.43" r="1.3" fill="#1f77b4"/>
<circle cx="260.10" cy="271.80" r="1.3" fill="#1f77b4"/>
<circle cx="266.96" cy="271.97" r="1.3" fill="#1f77b4"/>
<circle cx="273.81" cy="272.15" r="1.3" fill="#1f77b4"/>
<circle cx="280.67" cy="272.35" r="1.3" fill="#1f77b4"/>
<circle cx="287.53" cy="272.83" r="1.3" fill="#1f77b4"/>
<circle cx="294.38" cy="273.31" r="1.3" fill="#1f77b4"/>
<circle cx="301.24" cy="273.70" r="1.3" fill="#1f77b4"/>
<circle cx="308.09" cy="273.70" r="1.3" fill="#1f77b4"/>
<circle cx="314.95" cy="273.35" r="1.3" fill="#1f77b4"/>
<circle cx="321.80" cy="272.90" r="1.3" fill="#1f77b4"/>
<circle cx="328.66" cy="272.52" r="1.3" fill="#1f77b4"/>
<circle cx="335.52" cy="272.15" r="1.3" fill="#1f77b4"/>
<circle cx="342.37" cy="271.76" r="1.3" fill="#1f77b4"/>
<circle cx="349.23" cy="271.35" r="1.3" fill="#1f77b4"/>
<circle cx="356.08" cy="270.94" r="1.3" fill="#1f77b4"/>
<circle cx="362.94" cy="270.58" r="1.3" fill="#1f77b4"/>
<circle cx="369.79" cy="270.31" r="1.3" fill="#1f77b4"/>
<circle cx="376.65" cy="270.03" r="1.3" fill="#1f77b4"/>
<circle cx="383.51" cy="269.64" r="1.3" fill="#1f77b4"/>
<circle cx="390.36" cy="269.12" r="1.3" fill="#1f77b4"/>
<circle cx="397.22" cy="268.61" r="1.3" fill="#1f77b4"/>
<circle cx="404.07" cy="268.20" r="1.3" fill="#1f77b4"/>
<circle cx="410.93" cy="267.85" r="1.3" fill="#1f77b4"/>
<circle cx="417.78" cy="267.51" r="1.3" fill="#1f77b4"/>
<circle cx="424.64" cy="267.31" r="1.3" fill="#1f77b4"/>
<circle cx="431.49" cy="266.94" r="1.3" fill="#1f77b4"/>
<circle cx="438.35" cy="265.93" r="1.3" fill="#1f77b4"/>
<circle cx="445.21" cy="265.63" r="1.3" fill="#1f77b4"/>
<circle cx="452.06" cy="266.50" r="1.3" fill="#1f77b4"/>
<circle cx="458.92" cy="266.23" r="1.3" fill="#1f77b4"/>
<circle cx="465.77" cy="266.04" r="1.3" fill="#1f77b4"/>
<circle cx="472.63" cy="266.36" r="1.3" fill="#1f77b4"/>
<circle cx="479.48" cy="266.68" r="1.3" fill="#1f77b4"/>
<circle cx="486.34" cy="266.29" r="1.3" fill="#1f77b4"/>
<circle cx="493.20" cy="265.84" r="1.3" fill="#1f77b4"/>
<circle cx="500.05" cy="265.39" r="1.3" fill="#1f77b4"/>
<circle cx="506.91" cy="264.71" r="1.3" fill="#1f77b4"/>
<circle cx="513.76" cy="264.21" r="1.3" fill="#1f77b4"/>
<circle cx="520.62" cy="263.88" r="1.3" fill="#1f77b4"/>
<circle cx="527.47" cy="263.64" r="1.3" fill="#1f77b4"/>
<circle cx="534.33" cy="263.40" r="1.3" fill="#1f77b4"/>
<circle cx="541.19" cy="263.16" r="1.3" fill="#1f77b4"/>
<circle cx="548.04" cy="262.92" r="1.3" fill="#1f77b4"/>
<circle cx="554.90" cy="262.68" r="1.3" fill="#1f77b4"/>
<circle cx="561.75" cy="262.42" r="1.3" fill="#1f77b4"/>
<circle cx="568.61" cy="262.11" r="1.3" fill="#1f77b4"/>
<circle cx="575.46" cy="261.80" r="1.3" fill="#1f77b4"/>
<circle cx="582.32" cy="261.52" r="1.3" fill="#1f77b4"/>
<circle cx="589.18" cy="261.28" r="1.3" fill="#1f77b4"/>
<circle cx="596.03" cy="261.04" r="1.3" fill="#1f77b4"/>
<circle cx="602.89" cy="260.77" r="1.3" fill="#1f77b4"/>
<circle cx="609.74" cy="260.46" r="1.3" fill="#1f77b4"/>
<circle cx="616.60" cy="260.15" r="1.3" fill="#1f77b4"/>
<circle cx="623.45" cy="259.65" r="1.3" fill="#1f77b4"/>
<circle cx="630.31" cy="259.01" r="1.3" fill="#1f77b4"/>
<circle cx="637.16" cy="259.21" r="1.3" fill="#1f77b4"/>
<circle cx="644.02" cy="259.28" r="1.3" fill="#1f77b4"/>
<circle cx="650.88" cy="259.25" r="1.3" fill="#1f77b4"/>
<circle cx="657.73" cy="259.21" r="1.3" fill="#1f77b4"/>
<circle cx="664.59" cy="259.18" r="1.3" fill="#1f77b4"/>
<circle cx="671.44" cy="259.14" r="1.3" fill="#1f77b4"/>
<circle cx="678.30" cy="259.11" r="1.3" fill="#1f77b4"/>
<circle cx="685.15" cy="259.07" r="1.3" fill="#1f77b4"/>
<circle cx="692.01" cy="259.04" r="1.3" fill="#1f77b4"/>
<circle cx="698.87" cy="259.01" r="1.3" fill="#1f77b4"/>
<circle cx="705.72" cy="259.14" r="1.3" fill="#1f77b4"/>
<circle cx="712.58" cy="259.31" r="1.3" fill="#1f77b4"/>
<circle cx="719.43" cy="259.49" r="1.3" fill="#1f77b4"/>
<circle cx="726.29" cy="259.66" r="1.3" fill="#1f77b4"/>
<circle cx="733.14" cy="259.83" r="1.3" fill="#1f77b4"/>
<circle cx="740.00" cy="260.00" r="1.3" fill="#1f77b4"/>
<polyline points="75.00,258.80 81.86,259.00 88.71,259.59 95.57,259.98 102.42,260.32 109.28,260.66 116.13,261.13 122.99,261.61 129.85,262.09 136.70,262.64 143.56,263.18 150.41,263.73 157.27,264.28 164.12,264.62 170.98,264.83 177.84,265.04 184.69,265.36 191.55,265.74 198.40,266.11 205.26,266.49 212.11,266.87 218.97,267.24 225.82,267.80 232.68,268.38 239.54,268.96 246.39,269.32 253.25,269.66 260.10,270.00 266.96,270.24 273.81,270.48 280.67,270.71 287.53,270.85 294.38,272.13 301.24,272.53 308.09,272.11 314.95,271.55 321.80,270.90 328.66,270.15 335.52,269.28 342.37,268.47 349.23,267.82 356.08,267.17 362.94,266.54 369.79,265.92 376.65,265.30 383.51,264.47 390.36,263.45 397.22,262.42 404.07,261.53 410.93,260.74 417.78,259.95 424.64,259.28 431.49,258.48 438.35,257.23 445.21,256.94 452.06,258.40 458.92,258.51 465.77,258.55 472.63,258.09 479.48,257.63 486.34,257.03 493.20,256.19 500.05,255.09 506.91,254.37 513.76,253.65 520.62,252.96 527.47,252.48 534.33,252.00 541.19,251.50 548.04,250.92 554.90,250.33 561.75,249.74 568.61,249.13 575.46,248.51 582.32,247.90 589.18,247.32 596.03,246.74 602.89,246.15 609.74,245.57 616.60,244.99 623.45,244.56 630.31,244.29 637.16,244.01 644.02,243.90 650.88,243.90 657.73,243.90 664.59,243.90 671.44,243.90 678.30,243.90 685.15,243.90 692.01,243.90 698.87,243.90 705.72,243.90 712.58,243.90 719.43,243.90 726.29,243.90 733.14,243.90 740.00,243.90" fill="none" stroke="#df7b14" stroke-width="2" stroke-linejoin="round"/>
<circle cx="75.00" cy="258.80" r="1.3" fill="#df7b14"/>
<circle cx="81.86" cy="259.00" r="1.3" fill="#df7b14"/>
<circle cx="88.71" cy="259.59" r="1.3" fill="#df7b14"/>
<circle cx="95.57" cy="259.98" r="1.3" fill="#df7b14"/>
<circle cx="102.42" cy="260.32" r="1.3" fill="#df7b14"/>
<circle cx="109.28" cy="260.66" r="1.3" fill="#df7b14"/>
<circle cx="116.13" cy="261.13" r="1.3" fill="#df7b14"/>
<circle cx="122.99" cy="261.61" r="1.3" fill="#df7b14"/>
<circle cx="129.85" cy="262.09" r="1.3" fill="#df7b14"/>
<circle cx="136.70" cy="262.64" r="1.3" fill="#df7b14"/>
<circle cx="143.56" cy="263.18" r="1.3" fill="#df7b14"/>
<circle cx="150.41" cy="263.73" r="1.3" fill="#df7b14"/>
<circle cx="157.27" cy="264.28" r="1.3" fill="#df7b14"/>
<circle cx="164.12" cy="264.62" r="1.3" fill="#df7b14"/>
<circle cx="170.98" cy="264.83" r="1.3" fill="#df7b14"/>
<circle cx="177.84" cy="265.04" r="1.3" fill="#df7b14"/>
<circle cx="184.69" cy="265.36" r="1.3" fill="#df7b14"/>
<circle cx="191.55" cy="265.74" r="1.3" fill="#df7b14"/>
<circle cx="198.40" cy="266.11" r="1.3" fill="#df7b14"/>
<circle cx="205.26" cy="266.49" r="1.3" fill="#df7b14"/>
<circle cx="212.11" cy="266.87" r="1.3" fill="#df7b14"/>
<circle cx="218.97" cy="267.24" r="1.3" fill="#df7b14"/>
<circle cx="225.82" cy="267.80" r="1.3" fill="#df7b14"/>
<circle cx="232.68" cy="268.38" r="1.3" fill="#df7b14"/>
<circle cx="239.54" cy="268.96" r="1.3" fill="#df7b14"/>
<circle cx="246.39" cy="269.32" r="1.3" fill="#df7b14"/>
<circle cx="253.25" cy="269.66" r="1.3" fill="#df7b14"/>
<circle cx="260.10" cy="270.00" r="1.3" fill="#df7b14"/>
<circle cx="266.96" cy="270.24" r="1.3" fill="#df7b14"/>
<circle cx="273.81" cy="270.48" r="1.3" fill="#df7b14"/>
<circle cx="280.67" cy="270.71" r="1.3" fill="#df7b14"/>
<circle cx="287.53" cy="270.85" r="1.3" fill="#df7b14"/>
<circle cx="294.38" cy="272.13" r="1.3" fill="#df7b14"/>
<circle cx="301.24" cy="272.53" r="1.3" fill="#df7b14"/>
<circle cx="308.09" cy="272.11" r="1.3" fill="#df7b14"/>
<circle cx="314.95" cy="271.55" r="1.3" fill="#df7b14"/>
<circle cx="321.80" cy="270.90" r="1.3" fill="#df7b14"/>
<circle cx="328.66" cy="270.15" r="1.3" fill="#df7b14"/>
<circle cx="335.52" cy="269.28" r="1.3" fill="#df7b14"/>
<circle cx="342.37" cy="268.47" r="1.3" fill="#df7b14"/>
<circle cx="349.23" cy="267.82" r="1.3" fill="#df7b14"/>
<circle cx="356.08" cy="267.17" r="1.3" fill="#df7b14"/>
<circle cx="362.94" cy="266.54" r="1.3" fill="#df7b14"/>
<circle cx="369.79" cy="265.92" r="1.3" fill="#df7b14"/>
<circle cx="376.65" cy="265.30" r="1.3" fill="#df7b14"/>
<circle cx="383.51" cy="264.47" r="1.3" fill="#df7b14"/>
<circle cx="390.36" cy="263.45" r="1.3" fill="#df7b14"/>
<circle cx="397.22" cy="262.42" r="1.3" fill="#df7b14"/>
<circle cx="404.07" cy="261.53" r="1.3" fill="#df7b14"/>
<circle cx="410.93" cy="260.74" r="1.3" fill="#df7b14"/>
<circle cx="417.78" cy="259.95" r="1.3" fill="#df7b14"/>
<circle cx="424.64" cy="259.28" r="1.3" fill="#df7b14"/>
<circle cx="431.49" cy="258.48" r="1.3" fill="#df7b14"/>
<circle cx="438.35" cy="257.23" r="1.3" fill="#df7b14"/>
<circle cx="445.21" cy="256.94" r="1.3" fill="#df7b14"/>
<circle cx="452.06" cy="258.40" r="1.3" fill="#df7b14"/>
<circle cx="458.92" cy="258.51" r="1.3" fill="#df7b14"/>
<circle cx="465.77" cy="258.55" r="1.3" fill="#df7b14"/>
<circle cx="472.63" cy="258.09" r="1.3" fill="#df7b14"/>
<circle cx="479.48" cy="257.63" r="1.3" fill="#df7b14"/>
<circle cx="486.34" cy="257.03" r="1.3" fill="#df7b14"/>
<circle cx="493.20" cy="256.19" r="1.3" fill="#df7b14"/>
<circle cx="500.05" cy="255.09" r="1.3" fill="#df7b14"/>
<circle cx="506.91" cy="254.37" r="1.3" fill="#df7b14"/>
<circle cx="513.76" cy="253.65" r="1.3" fill="#df7b14"/>
<circle cx="520.62" cy="252.96" r="1.3" fill="#df7b14"/>
<circle cx="527.47" cy="252.48" r="1.3" fill="#df7b14"/>
<circle cx="534.33" cy="252.00" r="1.3" fill="#df7b14"/>
<circle cx="541.19" cy="251.50" r="1.3" fill="#df7b14"/>
<circle cx="548.04" cy="250.92" r="1.3" fill="#df7b14"/>
<circle cx="554.90" cy="250.33" r="1.3" fill="#df7b14"/>
<circle cx="561.75" cy="249.74" r="1.3" fill="#df7b14"/>
<circle cx="568.61" cy="249.13" r="1.3" fill="#df7b14"/>
<circle cx="575.46" cy="248.51" r="1.3" fill="#df7b14"/>
<circle cx="582.32" cy="247.90" r="1.3" fill="#df7b14"/>
<circle cx="589.18" cy="247.32" r="1.3" fill="#df7b14"/>
<circle cx="596.03" cy="246.74" r="1.3" fill="#df7b14"/>
<circle cx="602.89" cy="246.15" r="1.3" fill="#df7b14"/>
<circle cx="609.74" cy="245.57" r="1.3" fill="#df7b14"/>
<circle cx="616.60" cy="244.99" r="1.3" fill="#df7b14"/>
<circle cx="623.45" cy="244.56" r="1.3" fill="#df7b14"/>
<circle cx="630.31" cy="244.29" r="1.3" fill="#df7b14"/>
<circle cx="637.16" cy="244.01" r="1.3" fill="#df7b14"/>
<circle cx="644.02" cy="243.90" r="1.3" fill="#df7b14"/>
<circle cx="650.88" cy="243.90" r="1.3" fill="#df7b14"/>
<circle cx="657.73" cy="243.90" r="1.3" fill="#df7b14"/>
<circle cx="664.59" cy="243.90" r="1.3" fill="#df7b14"/>
<circle cx="671.44" cy="243.90" r="1.3" fill="#df7b14"/>
<circle cx="678.30" cy="243.90" r="1.3" fill="#df7b14"/>
<circle cx="685.15" cy="243.90" r="1.3" fill="#df7b14"/>
<circle cx="692.01" cy="243.90" r="1.3" fill="#df7b14"/>
<circle cx="698.87" cy="243.90" r="1.3" fill="#df7b14"/>
<circle cx="705.72" cy="243.90" r="1.3" fill="#df7b14"/>
<circle cx="712.58" cy="243.90" r="1.3" fill="#df7b14"/>
<circle cx="719.43" cy="243.90" r="1.3" fill="#df7b14"/>
<circle cx="726.29" cy="243.90" r="1.3" fill="#df7b14"/>
<circle cx="733.14" cy="243.90" r="1.3" fill="#df7b14"/>
<circle cx="740.00" cy="243.90" r="1.3" fill="#df7b14"/>
<line x1="75.0" y1="259.3" x2="740.0" y2="259.3" stroke="#e8953d" stroke-opacity="0.85" stroke-width="1" stroke-dasharray="3.5 3.2"/>
<line x1="75.0" y1="323.0" x2="740.0" y2="323.0" stroke="#62aee4" stroke-width="1.15" stroke-dasharray="4 2.8"/>
<line x1="75.0" y1="243.5" x2="740.0" y2="243.5" stroke="#3b6fc0" stroke-opacity="0.85" stroke-width="1" stroke-dasharray="4 2.8"/>
<text x="73.90" y="255.80" font-size="6.66" font-weight="400" fill="#e8953d" text-anchor="start" >Max Temp: 29 °C</text>
<text x="76.90" y="320.00" font-size="6.6" font-weight="400" fill="#e8953d" text-anchor="start" >Min Temp: 25 °C</text>
<text x="746.50" y="247.00" font-size="6.6" font-weight="400" fill="#3a8ed6" text-anchor="end" >Max Humidity: 72 %</text>
<text x="742.70" y="320.00" font-size="6.6" font-weight="400" fill="#3a8ed6" text-anchor="end" >Min Humidity: 69 %</text>
<line x1="77" y1="492.50" x2="81" y2="492.50" stroke="#ebebeb" stroke-width="1"/>
<text x="76.00" y="495.30" font-size="7.2" font-weight="400" fill="#707070" text-anchor="end" >0.00</text>
<line x1="77" y1="479.50" x2="81" y2="479.50" stroke="#ebebeb" stroke-width="1"/>
<text x="76.00" y="482.03" font-size="7.2" font-weight="400" fill="#707070" text-anchor="end" >1.00</text>
<line x1="77" y1="466.50" x2="81" y2="466.50" stroke="#ebebeb" stroke-width="1"/>
<text x="76.00" y="468.77" font-size="7.2" font-weight="400" fill="#707070" text-anchor="end" >2</text>
<line x1="77" y1="452.50" x2="81" y2="452.50" stroke="#ebebeb" stroke-width="1"/>
<text x="76.00" y="455.50" font-size="7.2" font-weight="400" fill="#707070" text-anchor="end" >3</text>
<line x1="77" y1="439.50" x2="81" y2="439.50" stroke="#ebebeb" stroke-width="1"/>
<text x="76.00" y="442.23" font-size="7.2" font-weight="400" fill="#707070" text-anchor="end" >4</text>
<line x1="77" y1="426.50" x2="81" y2="426.50" stroke="#ebebeb" stroke-width="1"/>
<text x="76.00" y="428.97" font-size="7.2" font-weight="400" fill="#707070" text-anchor="end" >5</text>
<line x1="77" y1="413.50" x2="81" y2="413.50" stroke="#ebebeb" stroke-width="1"/>
<text x="76.00" y="415.70" font-size="7.2" font-weight="400" fill="#707070" text-anchor="end" >6</text>
<line x1="81.5" y1="413.1" x2="81.5" y2="495.7" stroke="#ebebeb" stroke-width="1"/>
<line x1="81.0" y1="493.5" x2="807.0" y2="493.5" stroke="#ebebeb" stroke-width="1"/>
<text x="0" y="0" font-size="7" fill="#808080" text-anchor="middle" transform="translate(56.3,453) rotate(-90)">Current Coms in W</text>
<text x="0" y="0" font-size="6.6" fill="#707070" text-anchor="end" transform="translate(82.60,504.30) rotate(-45)">00:05</text>
<text x="0" y="0" font-size="6.6" fill="#707070" text-anchor="end" transform="translate(97.57,504.30) rotate(-45)">00:25</text>
<text x="0" y="0" font-size="6.6" fill="#707070" text-anchor="end" transform="translate(112.54,504.30) rotate(-45)">00:45</text>
<text x="0" y="0" font-size="6.6" fill="#707070" text-anchor="end" transform="translate(127.51,504.30) rotate(-45)">01:05</text>
<text x="0" y="0" font-size="6.6" fill="#707070" text-anchor="end" transform="translate(142.48,504.30) rotate(-45)">01:25</text>
<text x="0" y="0" font-size="6.6" fill="#707070" text-anchor="end" transform="translate(157.45,504.30) rotate(-45)">01:45</text>
<text x="0" y="0" font-size="6.6" fill="#707070" text-anchor="end" transform="translate(172.41,504.30) rotate(-45)">02:05</text>
<text x="0" y="0" font-size="6.6" fill="#707070" text-anchor="end" transform="translate(187.38,504.30) rotate(-45)">02:25</text>
<text x="0" y="0" font-size="6.6" fill="#707070" text-anchor="end" transform="translate(202.35,504.30) rotate(-45)">02:45</text>
<text x="0" y="0" font-size="6.6" fill="#707070" text-anchor="end" transform="translate(217.32,504.30) rotate(-45)">03:05</text>
<text x="0" y="0" font-size="6.6" fill="#707070" text-anchor="end" transform="translate(232.29,504.30) rotate(-45)">03:25</text>
<text x="0" y="0" font-size="6.6" fill="#707070" text-anchor="end" transform="translate(247.26,504.30) rotate(-45)">03:45</text>
<text x="0" y="0" font-size="6.6" fill="#707070" text-anchor="end" transform="translate(262.23,504.30) rotate(-45)">04:05</text>
<text x="0" y="0" font-size="6.6" fill="#707070" text-anchor="end" transform="translate(277.20,504.30) rotate(-45)">04:25</text>
<text x="0" y="0" font-size="6.6" fill="#707070" text-anchor="end" transform="translate(292.17,504.30) rotate(-45)">04:45</text>
<text x="0" y="0" font-size="6.6" fill="#707070" text-anchor="end" transform="translate(307.14,504.30) rotate(-45)">05:05</text>
<text x="0" y="0" font-size="6.6" fill="#707070" text-anchor="end" transform="translate(322.11,504.30) rotate(-45)">07:35</text>
<text x="0" y="0" font-size="6.6" fill="#707070" text-anchor="end" transform="translate(337.07,504.30) rotate(-45)">07:55</text>
<text x="0" y="0" font-size="6.6" fill="#707070" text-anchor="end" transform="translate(352.04,504.30) rotate(-45)">08:15</text>
<text x="0" y="0" font-size="6.6" fill="#707070" text-anchor="end" transform="translate(367.01,504.30) rotate(-45)">08:35</text>
<text x="0" y="0" font-size="6.6" fill="#707070" text-anchor="end" transform="translate(381.98,504.30) rotate(-45)">08:55</text>
<text x="0" y="0" font-size="6.6" fill="#707070" text-anchor="end" transform="translate(396.95,504.30) rotate(-45)">09:15</text>
<text x="0" y="0" font-size="6.6" fill="#707070" text-anchor="end" transform="translate(411.92,504.30) rotate(-45)">09:35</text>
<text x="0" y="0" font-size="6.6" fill="#707070" text-anchor="end" transform="translate(426.89,504.30) rotate(-45)">09:55</text>
<text x="0" y="0" font-size="6.6" fill="#707070" text-anchor="end" transform="translate(441.86,504.30) rotate(-45)">10:15</text>
<text x="0" y="0" font-size="6.6" fill="#707070" text-anchor="end" transform="translate(456.83,504.30) rotate(-45)">10:35</text>
<text x="0" y="0" font-size="6.6" fill="#707070" text-anchor="end" transform="translate(471.80,504.30) rotate(-45)">10:55</text>
<text x="0" y="0" font-size="6.6" fill="#707070" text-anchor="end" transform="translate(486.76,504.30) rotate(-45)">11:15</text>
<text x="0" y="0" font-size="6.6" fill="#707070" text-anchor="end" transform="translate(501.73,504.30) rotate(-45)">11:35</text>
<text x="0" y="0" font-size="6.6" fill="#707070" text-anchor="end" transform="translate(516.70,504.30) rotate(-45)">11:55</text>
<text x="0" y="0" font-size="6.6" fill="#707070" text-anchor="end" transform="translate(531.67,504.30) rotate(-45)">12:15</text>
<text x="0" y="0" font-size="6.6" fill="#707070" text-anchor="end" transform="translate(546.64,504.30) rotate(-45)">12:35</text>
<text x="0" y="0" font-size="6.6" fill="#707070" text-anchor="end" transform="translate(561.61,504.30) rotate(-45)">12:55</text>
<text x="0" y="0" font-size="6.6" fill="#707070" text-anchor="end" transform="translate(576.58,504.30) rotate(-45)">13:15</text>
<text x="0" y="0" font-size="6.6" fill="#707070" text-anchor="end" transform="translate(591.55,504.30) rotate(-45)">13:35</text>
<text x="0" y="0" font-size="6.6" fill="#707070" text-anchor="end" transform="translate(606.52,504.30) rotate(-45)">13:55</text>
<text x="0" y="0" font-size="6.6" fill="#707070" text-anchor="end" transform="translate(621.49,504.30) rotate(-45)">14:15</text>
<text x="0" y="0" font-size="6.6" fill="#707070" text-anchor="end" transform="translate(636.46,504.30) rotate(-45)">14:35</text>
<text x="0" y="0" font-size="6.6" fill="#707070" text-anchor="end" transform="translate(651.42,504.30) rotate(-45)">14:55</text>
<text x="0" y="0" font-size="6.6" fill="#707070" text-anchor="end" transform="translate(666.39,504.30) rotate(-45)">15:15</text>
<text x="0" y="0" font-size="6.6" fill="#707070" text-anchor="end" transform="translate(681.36,504.30) rotate(-45)">15:35</text>
<text x="0" y="0" font-size="6.6" fill="#707070" text-anchor="end" transform="translate(696.33,504.30) rotate(-45)">15:55</text>
<text x="0" y="0" font-size="6.6" fill="#707070" text-anchor="end" transform="translate(711.30,504.30) rotate(-45)">16:15</text>
<text x="0" y="0" font-size="6.6" fill="#707070" text-anchor="end" transform="translate(726.27,504.30) rotate(-45)">16:35</text>
<text x="0" y="0" font-size="6.6" fill="#707070" text-anchor="end" transform="translate(741.24,504.30) rotate(-45)">16:55</text>
<text x="0" y="0" font-size="6.6" fill="#707070" text-anchor="end" transform="translate(756.21,504.30) rotate(-45)">17:15</text>
<text x="0" y="0" font-size="6.6" fill="#707070" text-anchor="end" transform="translate(771.18,504.30) rotate(-45)">17:35</text>
<text x="0" y="0" font-size="6.6" fill="#707070" text-anchor="end" transform="translate(786.15,504.30) rotate(-45)">17:55</text>
<text x="0" y="0" font-size="6.6" fill="#707070" text-anchor="end" transform="translate(801.12,504.30) rotate(-45)">18:15</text>
<line x1="81.0" y1="413.5" x2="807.0" y2="413.5" stroke="#0000ff" stroke-width="1.4" stroke-dasharray="3.3 3.36"/>
<text x="87.90" y="426.00" font-size="6.7" font-weight="400" fill="#0000ff" text-anchor="start" >Max Power: 6 W</text>
<path d="M81.00,492.70 C83.99,492.70 85.49,492.70 88.48,492.70 C91.48,492.70 92.98,492.70 95.97,492.70 C98.96,492.70 100.46,492.70 103.45,492.70 C106.45,492.70 107.94,492.70 110.94,492.70 C113.93,492.70 117.33,492.70 118.42,492.70 C123.32,481.98 121.01,470.65 125.91,459.93 C127.00,457.54 130.40,459.93 133.39,459.93 C136.39,459.93 139.79,457.54 140.88,459.93 C145.77,470.65 143.46,481.98 148.36,492.70 C149.45,492.70 152.85,492.70 155.85,492.70 C158.84,492.70 160.34,492.70 163.33,492.70 C166.32,492.70 167.82,492.70 170.81,492.70 C173.81,492.70 175.31,492.70 178.30,492.70 C181.29,492.70 184.69,492.70 185.78,492.70 C190.67,482.08 190.27,460.20 193.27,460.20 C196.26,460.20 195.86,482.08 200.75,492.70 C201.85,492.70 205.24,492.70 208.24,492.70 C211.23,492.70 212.73,492.70 215.72,492.70 C218.72,492.70 220.21,492.70 223.21,492.70 C226.20,492.70 227.70,492.70 230.69,492.70 C233.68,492.70 235.18,492.70 238.18,492.70 C241.17,492.70 242.67,492.70 245.66,492.70 C248.65,492.70 250.15,492.70 253.14,492.70 C256.14,492.70 257.64,492.70 260.63,492.70 C263.62,492.70 265.12,492.70 268.11,492.70 C271.11,492.70 272.60,492.70 275.60,492.70 C278.59,492.70 280.09,492.70 283.08,492.70 C286.08,492.70 287.57,492.70 290.57,492.70 C293.56,492.70 295.06,492.70 298.05,492.70 C301.05,492.70 302.54,492.70 305.54,492.70 C308.53,492.70 311.96,492.70 313.02,492.70 C317.94,481.57 317.51,458.87 320.51,458.87 C323.50,458.87 323.07,481.57 327.99,492.70 C329.05,492.70 332.48,492.70 335.47,492.70 C338.47,492.70 339.96,492.70 342.96,492.70 C345.95,492.70 347.45,492.70 350.44,492.70 C353.44,492.70 354.93,492.70 357.93,492.70 C360.92,492.70 364.32,492.70 365.41,492.70 C370.31,481.98 369.90,459.93 372.90,459.93 C375.89,459.93 375.48,481.98 380.38,492.70 C381.47,492.70 384.87,492.70 387.87,492.70 C390.86,492.70 392.36,492.70 395.35,492.70 C398.34,492.70 399.84,492.70 402.84,492.70 C405.83,492.70 407.33,492.70 410.32,492.70 C413.31,492.70 414.81,492.70 417.80,492.70 C420.80,492.70 422.29,492.70 425.29,492.70 C428.28,492.70 429.78,492.70 432.77,492.70 C435.77,492.70 437.26,492.70 440.26,492.70 C443.25,492.70 447.12,492.70 447.74,492.70 C453.10,469.89 452.23,429.02 455.23,429.02 C458.22,429.02 459.72,492.70 462.71,492.70 C465.71,492.70 467.20,429.02 470.20,429.02 C473.19,429.02 472.32,469.89 477.68,492.70 C478.31,492.70 482.17,492.70 485.16,492.70 C488.16,492.70 489.66,492.70 492.65,492.70 C495.64,492.70 497.14,492.70 500.13,492.70 C503.13,492.70 504.62,492.70 507.62,492.70 C510.61,492.70 514.01,492.70 515.10,492.70 C519.99,482.08 519.59,460.20 522.59,460.20 C525.58,460.20 525.18,482.08 530.07,492.70 C531.17,492.70 536.95,492.70 537.56,492.70 C542.94,468.95 542.05,426.63 545.04,426.63 C548.04,426.63 547.14,468.95 552.53,492.70 C553.13,492.70 557.02,492.70 560.01,492.70 C563.00,492.70 564.50,492.70 567.49,492.70 C570.49,492.70 571.99,492.70 574.98,492.70 C577.97,492.70 581.33,492.70 582.46,492.70 C587.32,482.59 586.95,461.52 589.95,461.52 C592.94,461.52 592.58,482.59 597.43,492.70 C598.57,492.70 601.92,492.70 604.92,492.70 C607.91,492.70 609.41,492.70 612.40,492.70 C615.40,492.70 616.89,492.70 619.89,492.70 C622.88,492.70 624.38,492.70 627.37,492.70 C630.36,492.70 631.86,492.70 634.86,492.70 C637.85,492.70 641.73,492.70 642.34,492.70 C647.72,468.95 646.83,426.63 649.82,426.63 C652.82,426.63 651.93,468.95 657.31,492.70 C657.92,492.70 661.80,492.70 664.79,492.70 C667.79,492.70 669.28,492.70 672.28,492.70 C675.27,492.70 676.77,492.70 679.76,492.70 C682.76,492.70 684.25,492.70 687.25,492.70 C690.24,492.70 691.74,492.70 694.73,492.70 C697.73,492.70 699.22,492.70 702.22,492.70 C705.21,492.70 706.71,492.70 709.70,492.70 C712.69,492.70 714.19,492.70 717.19,492.70 C720.18,492.70 721.68,492.70 724.67,492.70 C727.66,492.70 729.16,492.70 732.15,492.70 C735.15,492.70 736.65,492.70 739.64,492.70 C742.63,492.70 744.13,492.70 747.12,492.70 C750.12,492.70 751.61,492.70 754.61,492.70 C757.60,492.70 759.10,492.70 762.09,492.70 C765.09,492.70 766.58,492.70 769.58,492.70 C772.57,492.70 774.07,492.70 777.06,492.70 C780.06,492.70 781.55,492.70 784.55,492.70 C787.54,492.70 789.04,492.70 792.03,492.70 C795.02,492.70 796.52,492.70 799.52,492.70 C802.51,492.70 804.01,492.70 807.00,492.70" fill="none" stroke="#ff0000" stroke-width="2" stroke-linejoin="round"/>
<circle cx="81.00" cy="492.70" r="1" fill="#ff0000"/>
<circle cx="88.48" cy="492.70" r="1" fill="#ff0000"/>
<circle cx="95.97" cy="492.70" r="1" fill="#ff0000"/>
<circle cx="103.45" cy="492.70" r="1" fill="#ff0000"/>
<circle cx="110.94" cy="492.70" r="1" fill="#ff0000"/>
<circle cx="118.42" cy="492.70" r="1" fill="#ff0000"/>
<circle cx="125.91" cy="459.93" r="1" fill="#ff0000"/>
<circle cx="133.39" cy="459.93" r="1" fill="#ff0000"/>
<circle cx="140.88" cy="459.93" r="1" fill="#ff0000"/>
<circle cx="148.36" cy="492.70" r="1" fill="#ff0000"/>
<circle cx="155.85" cy="492.70" r="1" fill="#ff0000"/>
<circle cx="163.33" cy="492.70" r="1" fill="#ff0000"/>
<circle cx="170.81" cy="492.70" r="1" fill="#ff0000"/>
<circle cx="178.30" cy="492.70" r="1" fill="#ff0000"/>
<circle cx="185.78" cy="492.70" r="1" fill="#ff0000"/>
<circle cx="193.27" cy="460.20" r="1" fill="#ff0000"/>
<circle cx="200.75" cy="492.70" r="1" fill="#ff0000"/>
<circle cx="208.24" cy="492.70" r="1" fill="#ff0000"/>
<circle cx="215.72" cy="492.70" r="1" fill="#ff0000"/>
<circle cx="223.21" cy="492.70" r="1" fill="#ff0000"/>
<circle cx="230.69" cy="492.70" r="1" fill="#ff0000"/>
<circle cx="238.18" cy="492.70" r="1" fill="#ff0000"/>
<circle cx="245.66" cy="492.70" r="1" fill="#ff0000"/>
<circle cx="253.14" cy="492.70" r="1" fill="#ff0000"/>
<circle cx="260.63" cy="492.70" r="1" fill="#ff0000"/>
<circle cx="268.11" cy="492.70" r="1" fill="#ff0000"/>
<circle cx="275.60" cy="492.70" r="1" fill="#ff0000"/>
<circle cx="283.08" cy="492.70" r="1" fill="#ff0000"/>
<circle cx="290.57" cy="492.70" r="1" fill="#ff0000"/>
<circle cx="298.05" cy="492.70" r="1" fill="#ff0000"/>
<circle cx="305.54" cy="492.70" r="1" fill="#ff0000"/>
<circle cx="313.02" cy="492.70" r="1" fill="#ff0000"/>
<circle cx="320.51" cy="458.87" r="1" fill="#ff0000"/>
<circle cx="327.99" cy="492.70" r="1" fill="#ff0000"/>
<circle cx="335.47" cy="492.70" r="1" fill="#ff0000"/>
<circle cx="342.96" cy="492.70" r="1" fill="#ff0000"/>
<circle cx="350.44" cy="492.70" r="1" fill="#ff0000"/>
<circle cx="357.93" cy="492.70" r="1" fill="#ff0000"/>
<circle cx="365.41" cy="492.70" r="1" fill="#ff0000"/>
<circle cx="372.90" cy="459.93" r="1" fill="#ff0000"/>
<circle cx="380.38" cy="492.70" r="1" fill="#ff0000"/>
<circle cx="387.87" cy="492.70" r="1" fill="#ff0000"/>
<circle cx="395.35" cy="492.70" r="1" fill="#ff0000"/>
<circle cx="402.84" cy="492.70" r="1" fill="#ff0000"/>
<circle cx="410.32" cy="492.70" r="1" fill="#ff0000"/>
<circle cx="417.80" cy="492.70" r="1" fill="#ff0000"/>
<circle cx="425.29" cy="492.70" r="1" fill="#ff0000"/>
<circle cx="432.77" cy="492.70" r="1" fill="#ff0000"/>
<circle cx="440.26" cy="492.70" r="1" fill="#ff0000"/>
<circle cx="447.74" cy="492.70" r="1" fill="#ff0000"/>
<circle cx="455.23" cy="429.02" r="1" fill="#ff0000"/>
<circle cx="462.71" cy="492.70" r="1" fill="#ff0000"/>
<circle cx="470.20" cy="429.02" r="1" fill="#ff0000"/>
<circle cx="477.68" cy="492.70" r="1" fill="#ff0000"/>
<circle cx="485.16" cy="492.70" r="1" fill="#ff0000"/>
<circle cx="492.65" cy="492.70" r="1" fill="#ff0000"/>
<circle cx="500.13" cy="492.70" r="1" fill="#ff0000"/>
<circle cx="507.62" cy="492.70" r="1" fill="#ff0000"/>
<circle cx="515.10" cy="492.70" r="1" fill="#ff0000"/>
<circle cx="522.59" cy="460.20" r="1" fill="#ff0000"/>
<circle cx="530.07" cy="492.70" r="1" fill="#ff0000"/>
<circle cx="537.56" cy="492.70" r="1" fill="#ff0000"/>
<circle cx="545.04" cy="426.63" r="1" fill="#ff0000"/>
<circle cx="552.53" cy="492.70" r="1" fill="#ff0000"/>
<circle cx="560.01" cy="492.70" r="1" fill="#ff0000"/>
<circle cx="567.49" cy="492.70" r="1" fill="#ff0000"/>
<circle cx="574.98" cy="492.70" r="1" fill="#ff0000"/>
<circle cx="582.46" cy="492.70" r="1" fill="#ff0000"/>
<circle cx="589.95" cy="461.52" r="1" fill="#ff0000"/>
<circle cx="597.43" cy="492.70" r="1" fill="#ff0000"/>
<circle cx="604.92" cy="492.70" r="1" fill="#ff0000"/>
<circle cx="612.40" cy="492.70" r="1" fill="#ff0000"/>
<circle cx="619.89" cy="492.70" r="1" fill="#ff0000"/>
<circle cx="627.37" cy="492.70" r="1" fill="#ff0000"/>
<circle cx="634.86" cy="492.70" r="1" fill="#ff0000"/>
<circle cx="642.34" cy="492.70" r="1" fill="#ff0000"/>
<circle cx="649.82" cy="426.63" r="1" fill="#ff0000"/>
<circle cx="657.31" cy="492.70" r="1" fill="#ff0000"/>
<circle cx="664.79" cy="492.70" r="1" fill="#ff0000"/>
<circle cx="672.28" cy="492.70" r="1" fill="#ff0000"/>
<circle cx="679.76" cy="492.70" r="1" fill="#ff0000"/>
<circle cx="687.25" cy="492.70" r="1" fill="#ff0000"/>
<circle cx="694.73" cy="492.70" r="1" fill="#ff0000"/>
<circle cx="702.22" cy="492.70" r="1" fill="#ff0000"/>
<circle cx="709.70" cy="492.70" r="1" fill="#ff0000"/>
<circle cx="717.19" cy="492.70" r="1" fill="#ff0000"/>
<circle cx="724.67" cy="492.70" r="1" fill="#ff0000"/>
<circle cx="732.15" cy="492.70" r="1" fill="#ff0000"/>
<circle cx="739.64" cy="492.70" r="1" fill="#ff0000"/>
<circle cx="747.12" cy="492.70" r="1" fill="#ff0000"/>
<circle cx="754.61" cy="492.70" r="1" fill="#ff0000"/>
<circle cx="762.09" cy="492.70" r="1" fill="#ff0000"/>
<circle cx="769.58" cy="492.70" r="1" fill="#ff0000"/>
<circle cx="777.06" cy="492.70" r="1" fill="#ff0000"/>
<circle cx="784.55" cy="492.70" r="1" fill="#ff0000"/>
<circle cx="792.03" cy="492.70" r="1" fill="#ff0000"/>
<circle cx="799.52" cy="492.70" r="1" fill="#ff0000"/>
<circle cx="807.00" cy="492.70" r="1" fill="#ff0000"/>
</svg>
</body></html>
